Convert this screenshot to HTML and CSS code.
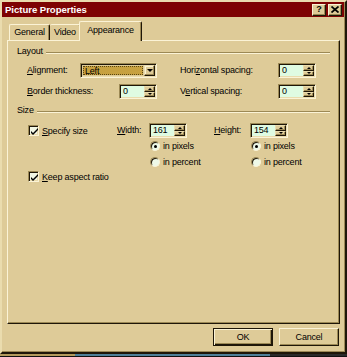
FILE: index.html
```html
<!DOCTYPE html>
<html>
<head>
<meta charset="utf-8">
<title>Picture Properties</title>
<link rel="stylesheet" href="styles.css">
</head>
<body>
<div class="window">
  <div class="titlebar">
    <span class="title">Picture Properties</span>
    <div class="tbtns">
      <span class="tbtn help">?</span>
      <span class="tbtn close"><svg width="8" height="7" viewBox="0 0 8 7"><path d="M0.5 0.5L7.5 6.5M7.5 0.5L0.5 6.5" stroke="#000" stroke-width="1.7"/></svg></span>
    </div>
  </div>
  <div class="body">
    <div class="tabs">
      <div class="tab">General</div>
      <div class="tab">Video</div>
      <div class="tab active">Appearance</div>
    </div>
    <div class="panel">
      <div class="group"><span>Layout</span><i class="etch"></i></div>
      <div class="layout-grid">
        <label class="lbl c1"><u>A</u>lignment:</label>
        <div class="select c23">
          <span class="sel-val">Left</span>
          <span class="drop"><i class="arr-down"></i></span>
        </div>
        <label class="lbl c5"><span>Hori<u>z</u>ontal spacing:</span></label>
        <div class="spin c6"><span class="val">0</span><span class="spbtns"><i class="sb"><b class="arr-up"></b></i><i class="sb"><b class="arr-dn"></b></i></span></div>
        <label class="lbl c12"><u>B</u>order thickness:</label>
        <div class="spin c3"><span class="val">0</span><span class="spbtns"><i class="sb"><b class="arr-up"></b></i><i class="sb"><b class="arr-dn"></b></i></span></div>
        <label class="lbl c5">V<u>e</u>rtical spacing:</label>
        <div class="spin c6"><span class="val">0</span><span class="spbtns"><i class="sb"><b class="arr-up"></b></i><i class="sb"><b class="arr-dn"></b></i></span></div>
      </div>
      <div class="group group-size"><span>Size</span><i class="etch"></i></div>
      <div class="size-grid">
        <div class="chk-row s1"><span class="chk"><svg width="7" height="7" viewBox="0 0 7 7"><path d="M0 3l2 2 5-5v2l-5 5-2-2z" fill="#000"/></svg></span><span><u>S</u>pecify size</span></div>
        <label class="lbl s2"><u>W</u>idth:</label>
        <div class="spin s3"><span class="val">161</span><span class="spbtns"><i class="sb"><b class="arr-up"></b></i><i class="sb"><b class="arr-dn"></b></i></span></div>
        <label class="lbl s4"><u>H</u>eight:</label>
        <div class="spin s5"><span class="val">154</span><span class="spbtns"><i class="sb"><b class="arr-up"></b></i><i class="sb"><b class="arr-dn"></b></i></span></div>
        <div class="radio-row s3 r2"><span class="radio on"></span><span>in pixels</span></div>
        <div class="radio-row s5 r2"><span class="radio on"></span><span>in pixels</span></div>
        <div class="radio-row s3 r3"><span class="radio"></span><span>in percent</span></div>
        <div class="radio-row s5 r3"><span class="radio"></span><span>in percent</span></div>
        <div class="chk-row s1 r4"><span class="chk"><svg width="7" height="7" viewBox="0 0 7 7"><path d="M0 3l2 2 5-5v2l-5 5-2-2z" fill="#000"/></svg></span><span><u>K</u>eep aspect ratio</span></div>
      </div>
    </div>
    <div class="buttons">
      <button class="btn default">OK</button>
      <button class="btn">Cancel</button>
    </div>
  </div>
</div>
<div class="desk"><span class="d1"></span><span class="d2"></span><span class="d3"></span></div>
</body>
</html>
```

FILE: styles.css
```css
:root {
  --face: #DECB98;
  --hi: #FBF3D6;
  --light: #EADCAE;
  --shadow: #9C8955;
  --dark: #1E1608;
  --mint: #DFFBE2;
  --gold: #C7A140;
}

* { box-sizing: border-box; }

html, body {
  margin: 0;
  padding: 0;
  background: var(--face);
}

body {
  width: 347px;
  height: 357px;
  overflow: hidden;
  font-family: "Liberation Sans", Arial, sans-serif;
  font-size: 9px;
  letter-spacing: -0.2px;
  color: #000;
}

.window {
  width: 347px;
  height: 354px;
  background: var(--face);
  border: 2px solid;
  border-color: var(--light) var(--dark) var(--dark) var(--light);
  box-shadow: inset -1px -1px 0 var(--shadow);
  display: flex;
  flex-direction: column;
}

.titlebar {
  height: 15px;
  margin-right: 1px;
  background: #7E0303;
  display: flex;
  align-items: center;
  justify-content: space-between;
  padding: 0 2px 0 3px;
}

.title {
  color: #fff;
  font-weight: bold;
  font-size: 9.6px;
  letter-spacing: -0.05px;
}

.tbtns {
  display: flex;
  gap: 2px;
}

.tbtn {
  width: 14px;
  height: 12px;
  background: var(--face);
  border: 1px solid;
  border-color: var(--hi) var(--dark) var(--dark) var(--hi);
  box-shadow: inset -1px -1px 0 var(--shadow);
  display: flex;
  align-items: center;
  justify-content: center;
  font-weight: bold;
  font-size: 9px;
  line-height: 1;
}

.body {
  flex: 1;
  padding: 4px 5px 0 5px;
  display: flex;
  flex-direction: column;
}

.tabs {
  display: flex;
  align-items: flex-end;
  height: 19px;
  padding-left: 2px;
  position: relative;
  z-index: 1;
}

.tab {
  height: 16px;
  padding-top: 2px;
  text-align: center;
  border-top: 1px solid var(--hi);
  border-left: 1px solid var(--hi);
  border-right: 1px solid var(--dark);
  box-shadow: inset -1px 0 0 var(--shadow);
  border-radius: 2px 2px 0 0;
  background: var(--face);
}

.tab:nth-child(1) { width: 41px; }
.tab:nth-child(2) { width: 31px; border-left: none; }

.tab.active {
  width: 63px;
  height: 20px;
  margin: 0 -2px -1px -2px;
  padding-top: 3px;
  position: relative;
}

.panel {
  height: 284px;
  border: 1px solid;
  border-color: var(--hi) var(--dark) var(--dark) var(--hi);
  box-shadow: inset -1px -1px 0 var(--shadow);
}

.group {
  display: flex;
  align-items: center;
  height: 11px;
  margin: 5px 9px 0 9px;
  line-height: 11px;
}

.group-size { margin-top: 6px; }

.etch {
  flex: 1;
  height: 2px;
  margin-left: 3px;
  border-top: 1px solid var(--shadow);
  border-bottom: 1px solid var(--hi);
  margin-top: 2px;
}

.lbl {
  align-self: center;
  white-space: nowrap;
  line-height: 11px;
}

.layout-grid {
  display: grid;
  grid-template-columns: 53px 39px 38px 23px 98px 39px;
  grid-template-rows: 15px 15px;
  row-gap: 6px;
  margin: 6px 0 0 19px;
}

.c1 { grid-column: 1; }
.c23 { grid-column: 2 / 4; }
.c12 { grid-column: 1 / 3; }
.c3 { grid-column: 3; }
.c5 { grid-column: 5; }
.c6 { grid-column: 6; }

.select, .spin {
  height: 15px;
  border: 1px solid;
  border-color: var(--shadow) var(--hi) var(--hi) var(--shadow);
  box-shadow: inset 1px 1px 0 var(--dark), inset -1px -1px 0 var(--light);
  display: flex;
  align-items: stretch;
  padding: 1px;
}

.select {
  background: var(--face);
}

.sel-val {
  flex: 1;
  margin: 1px;
  background: var(--gold);
  outline: 1px dotted #5a4510;
  outline-offset: -1px;
  padding-left: 2px;
  line-height: 10px;
}

.drop {
  width: 11px;
  background: var(--face);
  border: 1px solid;
  border-color: var(--light) var(--dark) var(--dark) var(--light);
  box-shadow: inset -1px -1px 0 var(--shadow), inset 1px 1px 0 var(--hi);
  display: flex;
  align-items: center;
  justify-content: center;
}

.arr-down {
  width: 0; height: 0;
  border-left: 3px solid transparent;
  border-right: 3px solid transparent;
  border-top: 3px solid #000;
}

.spin {
  width: 38px;
  background: var(--mint);
}

.spin .val {
  flex: 1;
  padding-left: 2px;
  line-height: 11px;
}

.spbtns {
  width: 11px;
  display: flex;
  flex-direction: column;
}

.sb {
  flex: 1;
  background: var(--face);
  border: 1px solid;
  border-color: var(--light) var(--dark) var(--dark) var(--light);
  box-shadow: inset -1px -1px 0 var(--shadow);
  display: flex;
  align-items: center;
  justify-content: center;
}

.arr-up, .arr-dn {
  width: 0; height: 0;
  border-left: 2px solid transparent;
  border-right: 2px solid transparent;
}
.arr-up { border-bottom: 2px solid #000; }
.arr-dn { border-top: 2px solid #000; }

.size-grid {
  display: grid;
  grid-template-columns: 89px 32px 65px 36px 70px;
  grid-template-rows: 15px 16px 15px 15px;
  margin: 7px 0 0 20px;
}

.s1 { grid-column: 1; }
.s2 { grid-column: 2; }
.s3 { grid-column: 3; }
.s4 { grid-column: 4; }
.s5 { grid-column: 5; }
.r2 { grid-row: 2; }
.r3 { grid-row: 3; }
.r4 { grid-row: 4; grid-column: 1 / 4; }

.chk-row, .radio-row {
  display: flex;
  align-items: center;
  gap: 3px;
  white-space: nowrap;
}

.chk {
  flex: none;
  width: 11px;
  height: 11px;
  background: #F1F6E4;
  border: 1px solid;
  border-color: var(--shadow) var(--hi) var(--hi) var(--shadow);
  box-shadow: inset 1px 1px 0 var(--dark), inset -1px -1px 0 var(--light);
  display: flex;
  align-items: center;
  justify-content: center;
  padding: 1px 0 0 1px;
}

.radio-row { margin-left: 1px; }

.radio {
  flex: none;
  width: 10px;
  height: 10px;
  border-radius: 50%;
  background: #EEF9E8;
  border: 1px solid;
  border-color: var(--shadow) var(--hi) var(--hi) var(--shadow);
  box-shadow: inset 1px 1px 0 var(--dark);
  position: relative;
}

.radio.on::after {
  content: "";
  position: absolute;
  left: 3px;
  top: 3px;
  width: 3px;
  height: 3px;
  border-radius: 50%;
  background: #000;
}

.buttons {
  display: flex;
  justify-content: flex-end;
  gap: 6px;
  margin-top: 4px;
  padding-right: 1px;
}

.btn {
  width: 60px;
  height: 18px;
  padding: 0;
  font-family: "Liberation Sans", Arial, sans-serif;
  font-size: 9px;
  letter-spacing: -0.2px;
  color: #000;
  background: var(--face);
  border: 1px solid;
  border-color: var(--hi) var(--dark) var(--dark) var(--hi);
  box-shadow: inset -1px -1px 0 var(--shadow);
}

.btn.default {
  border: 1px solid var(--dark);
  box-shadow: inset 1px 1px 0 var(--hi), inset -1px -1px 0 var(--dark), inset -2px -2px 0 var(--shadow);
}

.desk {
  display: flex;
  height: 3px;
  border-bottom: 1px solid #111;
}
.desk .d1 { width: 75px; background: #B39A5C; }
.desk .d2 { width: 195px; background: #4E7F98; }
.desk .d3 { flex: 1; background: #2A2A2A; }
```
